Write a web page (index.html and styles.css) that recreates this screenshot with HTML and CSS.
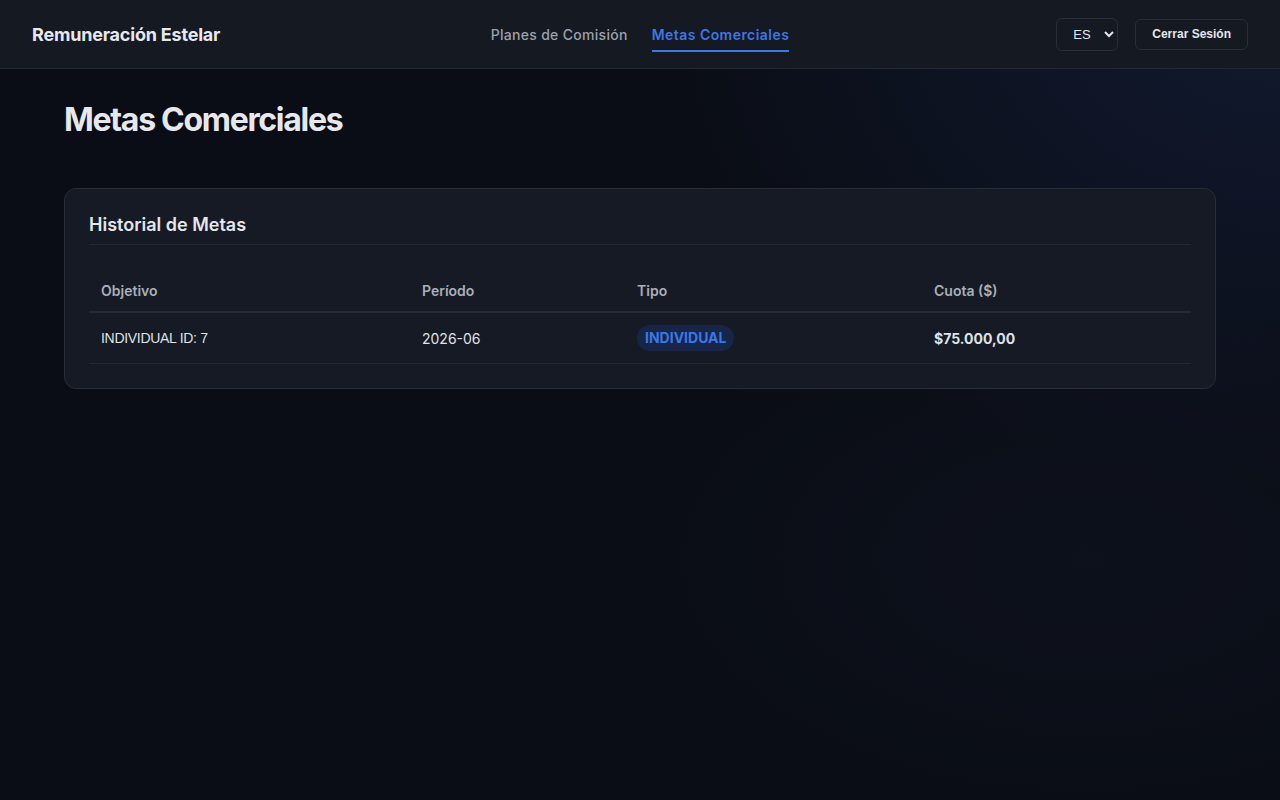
FILE: index.html
```html
<!DOCTYPE html>
<html lang="es">
<head>
  <meta charset="UTF-8">
  <meta name="viewport" content="width=device-width, initial-scale=1.0">
  <title>Remuneración Estelar - Metas Comerciales</title>
  <link rel="stylesheet" href="styles.css">
</head>
<body>
  <header class="topbar">
    <div class="brand">Remuneración Estelar</div>
    <nav class="nav">
      <a href="#" class="nav-link">Planes de Comisión</a>
      <a href="#" class="nav-link active">Metas Comerciales</a>
    </nav>
    <div class="actions">
      <select class="lang">
        <option>ES</option>
        <option>EN</option>
      </select>
      <button class="logout">Cerrar Sesión</button>
    </div>
  </header>

  <main class="page">
    <h1 class="page-title">Metas Comerciales</h1>

    <section class="card">
      <h2 class="card-title">Historial de Metas</h2>
      <table class="goals">
        <thead>
          <tr>
            <th class="col-target">Objetivo</th>
            <th class="col-period">Período</th>
            <th class="col-type">Tipo</th>
            <th class="col-quota">Cuota ($)</th>
          </tr>
        </thead>
        <tbody>
          <tr>
            <td class="target">INDIVIDUAL ID: 7</td>
            <td>2026-06</td>
            <td><span class="badge">INDIVIDUAL</span></td>
            <td class="amount">$75.000,00</td>
          </tr>
        </tbody>
      </table>
    </section>
  </main>
</body>
</html>
```

FILE: styles.css
```css
* {
  box-sizing: border-box;
}
html, body {
  min-height: 100%;
}
body {
  margin: 0;
  min-height: 800px;
  font-family: Inter, "Noto Sans", sans-serif;
  color: #e4e6ec;
  background-color: #0a0d15;
  background-image:
    radial-gradient(ellipse 900px 700px at 100% 0%, rgba(24, 36, 70, 0.55), rgba(10, 13, 21, 0) 70%),
    radial-gradient(ellipse 700px 400px at 85% 70%, rgba(18, 24, 40, 0.35), rgba(10, 13, 21, 0) 70%);
}

/* top bar */
.topbar {
  height: 69px;
  display: flex;
  align-items: center;
  justify-content: space-between;
  padding: 0 32px;
  background-color: #151922;
  border-bottom: 1px solid #242833;
}
.brand {
  font-size: 18px;
  font-weight: 700;
  color: #e6e8ee;
  letter-spacing: -0.2px;
  width: 300px;
}
.nav {
  display: flex;
  gap: 24px;
  align-items: center;
  margin-left: 0;
}
.nav-link {
  font-size: 14px;
  font-weight: 500;
  color: #9ca2ae;
  text-decoration: none;
  padding: 6px 0 7px;
  border-bottom: 2px solid transparent;
  margin-top: 4px;
  letter-spacing: 0.3px;
}
.nav-link.active {
  color: #3b78e7;
  font-weight: 600;
  border-bottom-color: #3b78e7;
  letter-spacing: 0.45px;
}
.actions {
  width: 300px;
  display: flex;
  justify-content: flex-end;
  align-items: center;
  gap: 17px;
}
.lang {
  height: 33px;
  width: 62px;
  padding: 0 4px 0 12px;
  background-color: #151922;
  color: #e4e6ec;
  border: 1px solid #2a2e39;
  border-radius: 6px;
  font-family: "Liberation Sans", Arial, sans-serif;
  font-size: 13px;
}
.logout {
  height: 31px;
  padding: 0 16px;
  background-color: #151922;
  color: #e4e6ec;
  border: 1px solid #2a2e39;
  border-radius: 6px;
  font-family: "Liberation Sans", Arial, sans-serif;
  font-size: 12px;
  font-weight: 700;
  cursor: pointer;
}

/* content */
.page {
  padding: 32px 64px;
}
.page-title {
  margin: 0 0 49px;
  font-size: 32px;
  line-height: 38px;
  font-weight: 700;
  letter-spacing: -1.3px;
  color: #e6e8ee;
}
.card {
  background-color: #161a24;
  border: 1px solid #282c37;
  border-radius: 12px;
  padding: 23px 24px 24px;
}
.card-title {
  margin: 0;
  padding: 1px 0 7px;
  font-size: 18px;
  line-height: 24px;
  font-weight: 600;
  color: #e4e6ec;
  border-bottom: 1px solid #252935;
}

.goals {
  width: 100%;
  margin-top: 24px;
  border-collapse: collapse;
  font-size: 14px;
}
.goals th {
  text-align: left;
  padding: 12px;
  height: 43px;
  font-weight: 600;
  color: #a9aeb9;
  border-bottom: 2px solid #272b36;
}
.col-target { width: 321px; }
.col-period { width: 215px; }
.col-type { width: 297px; }
.goals td {
  padding: 12px;
  height: 50px;
  color: #dfe2e8;
  border-bottom: 1px solid #252935;
}
.goals td.target {
  font-family: "Liberation Sans", Arial, sans-serif;
  letter-spacing: -0.3px;
}
.goals td.amount {
  font-weight: 700;
}
.badge {
  display: inline-block;
  padding: 4px 8px;
  line-height: 18px;
  border-radius: 999px;
  background-color: #172548;
  color: #3b78e7;
  font-weight: 700;
  font-size: 14px;
}
```
